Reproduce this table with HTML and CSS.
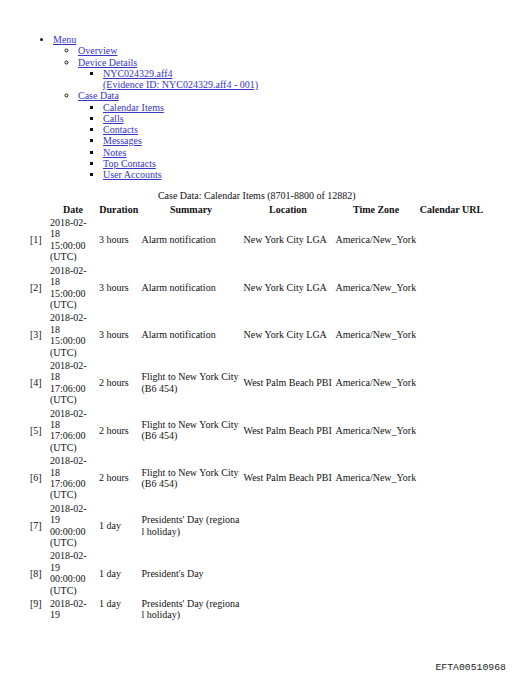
FILE: index.html
```
<!DOCTYPE html>
<html>
<head>
<meta charset="utf-8">
<link rel="stylesheet" href="styles.css">
</head>
<body>
<ul class="menu">
  <li><a href="#">Menu</a>
    <ul>
      <li><a href="#">Overview</a></li>
      <li><a href="#">Device Details</a>
        <ul>
          <li><a href="#">NYC024329.aff4<br>(Evidence ID: NYC024329.aff4 - 001)</a></li>
        </ul>
      </li>
      <li><a href="#">Case Data</a>
        <ul>
          <li><a href="#">Calendar Items</a></li>
          <li><a href="#">Calls</a></li>
          <li><a href="#">Contacts</a></li>
          <li><a href="#">Messages</a></li>
          <li><a href="#">Notes</a></li>
          <li><a href="#">Top Contacts</a></li>
          <li><a href="#">User Accounts</a></li>
        </ul>
      </li>
    </ul>
  </li>
</ul>

<table class="items">
  <caption>Case Data: Calendar Items (8701-8800 of 12882)</caption>
  <colgroup>
    <col class="c-idx"><col class="c-date"><col class="c-dur"><col class="c-sum"><col class="c-loc"><col class="c-tz"><col class="c-url">
  </colgroup>
  <thead>
    <tr><th></th><th>Date</th><th>Duration</th><th>Summary</th><th>Location</th><th>Time Zone</th><th>Calendar URL</th></tr>
  </thead>
  <tbody>
    <tr><td>[1]</td><td>2018-02-<wbr>18 15:00:00 (UTC)</td><td>3 hours</td><td>Alarm notification</td><td class="nw">New York City LGA</td><td class="nw">America/New_York</td><td></td></tr>
    <tr><td>[2]</td><td>2018-02-<wbr>18 15:00:00 (UTC)</td><td>3 hours</td><td>Alarm notification</td><td class="nw">New York City LGA</td><td class="nw">America/New_York</td><td></td></tr>
    <tr><td>[3]</td><td>2018-02-<wbr>18 15:00:00 (UTC)</td><td>3 hours</td><td>Alarm notification</td><td class="nw">New York City LGA</td><td class="nw">America/New_York</td><td></td></tr>
    <tr><td>[4]</td><td>2018-02-<wbr>18 17:06:00 (UTC)</td><td>2 hours</td><td>Flight to New York City<br>(B6 454)</td><td class="nw">West Palm Beach PBI</td><td class="nw">America/New_York</td><td></td></tr>
    <tr><td>[5]</td><td>2018-02-<wbr>18 17:06:00 (UTC)</td><td>2 hours</td><td>Flight to New York City<br>(B6 454)</td><td class="nw">West Palm Beach PBI</td><td class="nw">America/New_York</td><td></td></tr>
    <tr><td>[6]</td><td>2018-02-<wbr>18 17:06:00 (UTC)</td><td>2 hours</td><td>Flight to New York City<br>(B6 454)</td><td class="nw">West Palm Beach PBI</td><td class="nw">America/New_York</td><td></td></tr>
    <tr><td>[7]</td><td>2018-02-<wbr>19 00:00:00 (UTC)</td><td>1 day</td><td>Presidents' Day (regiona<br>l holiday)</td><td></td><td></td><td></td></tr>
    <tr><td>[8]</td><td>2018-02-<wbr>19 00:00:00 (UTC)</td><td>1 day</td><td>President's Day</td><td></td><td></td><td></td></tr>
    <tr class="clipped"><td>[9]</td><td>2018-02-<wbr>19</td><td>1 day</td><td>Presidents' Day (regiona<br>l holiday)</td><td></td><td></td><td></td></tr>
  </tbody>
</table>

<div class="stamp">EFTA00510968</div>
</body>
</html>
```

FILE: styles.css
```
html, body {
  margin: 0;
  padding: 0;
  background: #ffffff;
}

body {
  width: 512px;
  height: 678px;
  box-sizing: border-box;
  display: flex;
  flex-direction: column;
  font-family: "Liberation Serif", "Times New Roman", serif;
  font-size: 10px;
  color: #111111;
}

a {
  color: #3636c4;
  text-decoration: underline;
}

.menu {
  margin: 34px 0 10px 0;
  padding-left: 53px;
  line-height: 11.25px;
  list-style: disc;
}

.menu ul {
  margin: 0;
  padding-left: 25px;
  list-style: circle;
}

.menu ul ul {
  list-style: square;
}

.items {
  margin-left: 28px;
  width: 457.5px;
  table-layout: fixed;
  border-collapse: separate;
  border-spacing: 1px 2px;
  line-height: 11.4px;
}

.items caption {
  line-height: 11.4px;
}

.c-idx { width: 19px; }
.c-date { width: 48px; }
.c-dur { width: 41.5px; }
.c-sum { width: 101px; }
.c-loc { width: 91px; }
.c-tz { width: 83px; }
.c-url { width: 66px; }

.items th,
.items td {
  padding: 0 1px;
  vertical-align: middle;
}

.items th {
  font-weight: bold;
  text-align: center;
  white-space: nowrap;
}

.items td {
  text-align: left;
}

.items td.nw {
  white-space: nowrap;
}

.items tr.clipped td {
  vertical-align: top;
}

.stamp {
  margin-top: auto;
  align-self: flex-end;
  padding: 0 6px 5px 0;
  font-family: "Liberation Mono", monospace;
  font-size: 9.8px;
  color: #222222;
  line-height: 11px;
}
```
